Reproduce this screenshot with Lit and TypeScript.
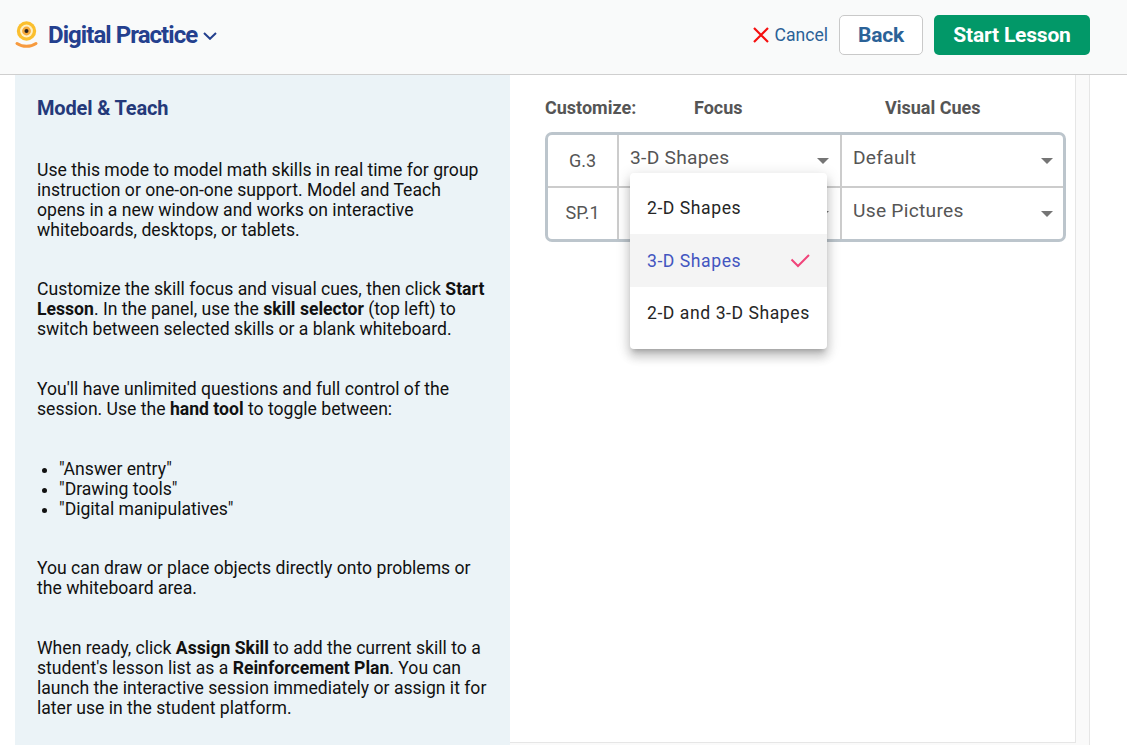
import { LitElement, html, css } from "lit";
import { customElement } from "lit/decorators.js";

const caret = html`<svg class="caret" width="12" height="6" viewBox="0 0 12 6"><path d="M0 0h12L6 6z" fill="#757575"/></svg>`;

@customElement("app-root")
export class AppRoot extends LitElement {
  static styles = css`
    :host { display: block; width: 1127px; height: 745px; overflow: hidden; background: #fff; font-family: Roboto, "Liberation Sans", sans-serif; color: #111; position: relative; }
    .top { height: 70px; background: #f9fafa; border-bottom: 1px solid #cfcfcf; display: flex; align-items: center; padding: 0 37px 4px 15px; box-sizing: content-box; }
    .logo { margin-right: 10px; display: block; }
    .title { font-size: 24px; font-weight: 700; color: #24408e; letter-spacing: -0.95px; }
    .chev { margin-left: 6px; margin-top: 1px; }
    .spacer { flex: 1; }
    .cancel { display: flex; align-items: center; gap: 5px; color: #2b6297; font-size: 17.6px; margin-right: 11px; }
    .btn { height: 40px; box-sizing: border-box; display: flex; align-items: center; justify-content: center; border-radius: 5px; font-size: 21px; font-weight: 700; letter-spacing: -0.2px; }
    .back { width: 84px; background: #fff; border: 1px solid #c9c9c9; color: #2b6297; margin-right: 11px; }
    .start { width: 156px; background: #029868; color: #fff; }
    .main { display: flex; height: 670px; margin-left: 15px; width: 1075px; box-sizing: border-box; background: #fafafa; border-right: 1px solid #e6e6e6; align-items: flex-start; }
    .left { width: 495px; height: 670px; flex: none; background: #ebf3f7; box-sizing: border-box; padding: 21px 22px 0; font-size: 17.6px; line-height: 20px; }
    .left h2 { margin: 0 0 40px; font-size: 20px; line-height: 24px; font-weight: 700; color: #24397a; letter-spacing: -0.15px; }
    .left p { margin: 0 0 40px; }
    .left p.tight { margin-bottom: 39px; }
    .left ul { margin: 0 0 39px; padding-left: 22px; }
    .left b { font-weight: 700; }
    .right { width: 566px; height: 668px; flex: none; box-sizing: border-box; background: #fff; border-right: 1px solid #e6e6e6; border-bottom: 1px solid #e6e6e6; padding: 21px 10px 0 35px; position: relative; }
    .heads { display: grid; grid-template-columns: 149px 191px 1fr; height: 22px; align-items: center; font-size: 18px; font-weight: 700; color: #555; }
    .table { margin-top: 14px; width: 521px; height: 110px; box-sizing: border-box; border: 3px solid #bcc5cc; border-radius: 7px; display: grid; grid-template-columns: 71px 223px 1fr; grid-template-rows: 53px 1fr; }
    .cell { display: flex; align-items: center; box-sizing: border-box; border-right: 2px solid #ccc; border-bottom: 2px solid #ccc; color: #555; }
    .cell.skill { justify-content: center; font-size: 18px; }
    .cell.skill.last { padding-bottom: 2px; }
    .cell.sel { justify-content: space-between; padding: 0 11px 6px 11px; font-size: 19.2px; letter-spacing: 0.27px; }
    .cell.sel.end { padding-right: 10px; }
    .cell.end { border-right: 0; }
    .cell.last { border-bottom: 0; }
    .caret { display: block; margin-top: 7px; }
    .menu { position: absolute; left: 120px; top: 98px; width: 197px; height: 176px; box-sizing: border-box; padding: 8px 0; background: #fff; border-radius: 4px; box-shadow: 0 5px 5px -3px rgba(0,0,0,.2), 0 8px 10px 1px rgba(0,0,0,.14), 0 3px 14px 2px rgba(0,0,0,.12); }
    .item { height: 53px; display: flex; align-items: center; justify-content: space-between; padding: 0 17px; font-size: 17.6px; letter-spacing: 0.55px; color: #262626; box-sizing: border-box; }
    .item.on { background: #f4f4f4; color: #4355c0; }
    .item.end { padding-bottom: 2px; }
  `;

  render() {
    return html`
      <div class="top">
        <svg class="logo" width="23" height="28" viewBox="0 0 23 28">
          <circle cx="11.5" cy="10" r="9.7" fill="#fbbf2e"/>
          <circle cx="11.5" cy="10" r="6.4" fill="#fff0c4"/>
          <circle cx="11.5" cy="10" r="4.4" fill="#f5a93a"/>
          <circle cx="11.5" cy="10" r="2" fill="#2a2320"/>
          <path d="M2 22.5c5.5 3.8 13.5 3.8 19 0" fill="none" stroke="#f79a3e" stroke-width="3" stroke-linecap="round"/>
        </svg>
        <span class="title">Digital Practice</span>
        <svg class="chev" width="14" height="8" viewBox="0 0 14 8"><path d="M1 1 7 6.8 13 1" fill="none" stroke="#24408e" stroke-width="2"/></svg>
        <div class="spacer"></div>
        <div class="cancel">
          <svg width="16" height="16" viewBox="0 0 16 16"><path d="M1 1l14 14M15 1 1 15" stroke="#f50f0f" stroke-width="2.2"/></svg>
          <span>Cancel</span>
        </div>
        <div class="btn back">Back</div>
        <div class="btn start">Start Lesson</div>
      </div>
      <div class="main">
        <div class="left">
          <h2>Model &amp; Teach</h2>
          <p class="tight">Use this mode to model math skills in real time for group instruction or one-on-one support. Model and Teach opens in a new window and works on interactive whiteboards, desktops, or tablets.</p>
          <p>Customize the skill focus and visual cues, then click <b>Start Lesson</b>. In the panel, use the <b>skill selector</b> (top left) to switch between selected skills or a blank whiteboard.</p>
          <p>You'll have unlimited questions and full control of the session. Use the <b>hand tool</b> to toggle between:</p>
          <ul>
            <li>"Answer entry"</li>
            <li>"Drawing tools"</li>
            <li>"Digital manipulatives"</li>
          </ul>
          <p>You can draw or place objects directly onto problems or the whiteboard area.</p>
          <p>When ready, click <b>Assign Skill</b> to add the current skill to a student's lesson list as a <b>Reinforcement Plan</b>. You can launch the interactive session immediately or assign it for later use in the student platform.</p>
        </div>
        <div class="right">
          <div class="heads">
            <span>Customize:</span>
            <span>Focus</span>
            <span>Visual Cues</span>
          </div>
          <div class="table">
            <div class="cell skill">G.3</div>
            <div class="cell sel"><span>3-D Shapes</span>${caret}</div>
            <div class="cell sel end"><span>Default</span>${caret}</div>
            <div class="cell skill last">SP.1</div>
            <div class="cell sel last"><span>3-D Shapes</span>${caret}</div>
            <div class="cell sel end last"><span>Use Pictures</span>${caret}</div>
          </div>
          <div class="menu">
            <div class="item">2-D Shapes</div>
            <div class="item on"><span>3-D Shapes</span>
              <svg width="20" height="15" viewBox="0 0 20 15"><path d="M1.5 6.5 8 13 19 2" fill="none" stroke="#f0447a" stroke-width="2"/></svg>
            </div>
            <div class="item end">2-D and 3-D Shapes</div>
          </div>
        </div>
      </div>
    `;
  }
}
